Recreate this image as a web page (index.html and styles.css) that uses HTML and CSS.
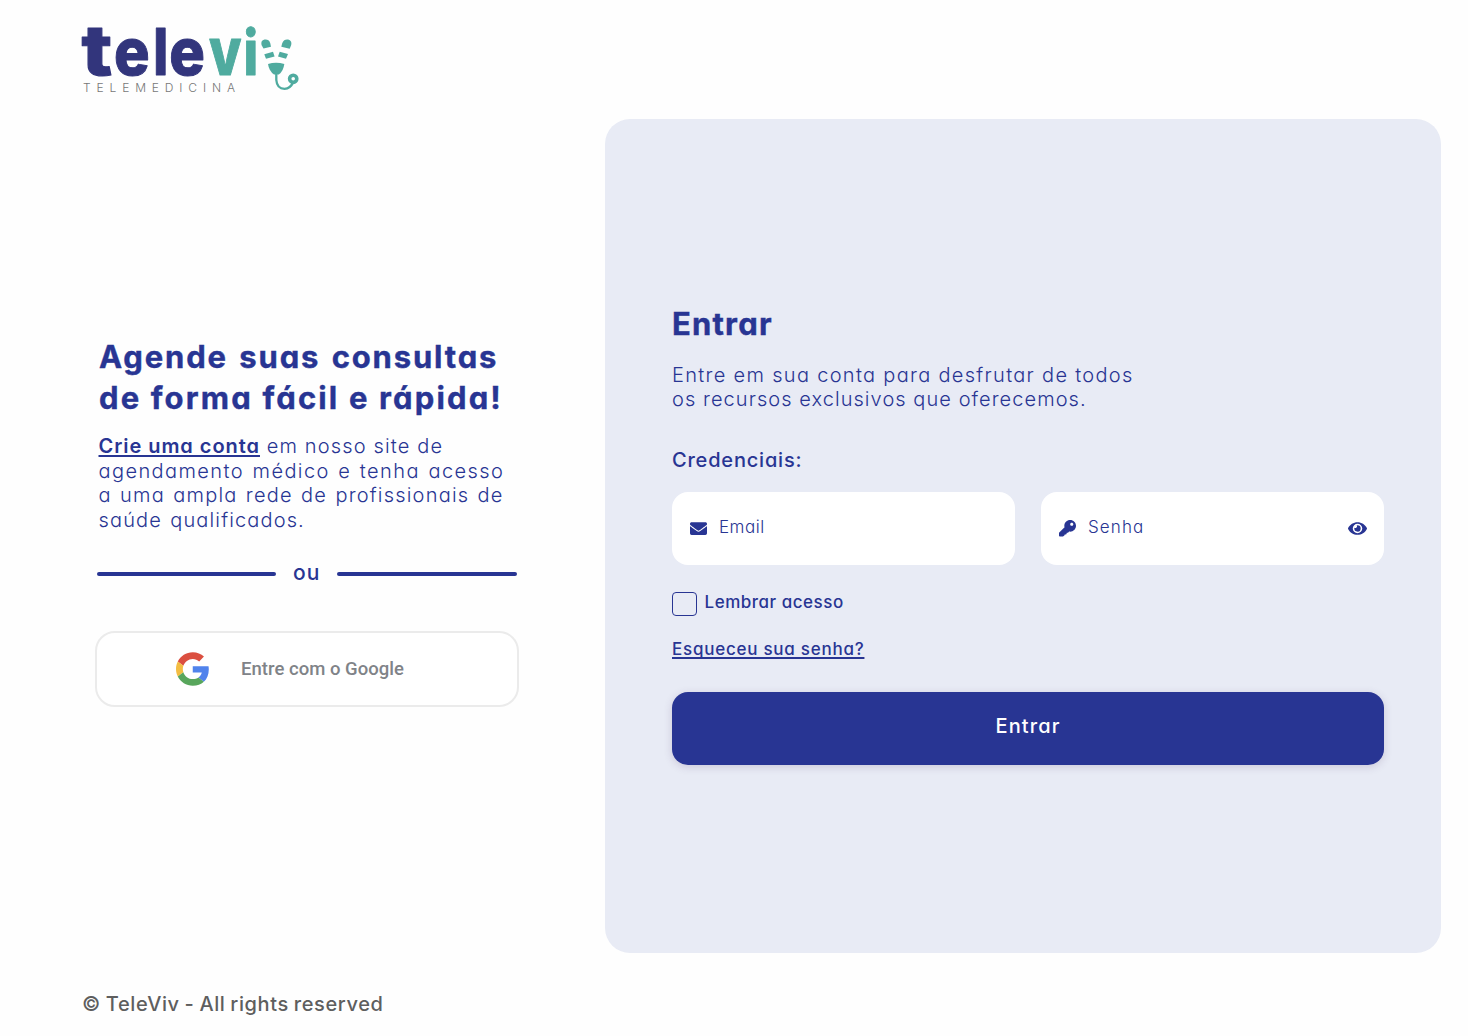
FILE: index.html
```html
<!DOCTYPE html>
<html lang="pt-BR">
<head>
<meta charset="utf-8">
<title>TeleViv - Entrar</title>
<link rel="stylesheet" href="styles.css">
</head>
<body>
<div class="page">
  <header class="header">
    <svg class="logo" width="220" height="70" viewBox="80 25 220 70" role="img" aria-label="Televiv Telemedicina">
      <g class="logo-word logo-navy">
        <text transform="translate(81.500 75) scale(1.220 1.050)">t</text>
        <text transform="translate(114 75) scale(.9 1)">e</text>
        <text transform="translate(153.300 74.500) scale(.8 .98)">l</text>
        <text transform="translate(169.300 75) scale(.9 1)">e</text>
      </g>
      <g class="logo-word logo-teal">
        <text transform="translate(209 74.500) scale(.8 1)">v</text>
        <text transform="translate(243.500 74.500) scale(.78 .95)">i</text>
      </g>
      <text class="logo-sub" x="83" y="92" textLength="152">TELEMEDICINA</text>
      <g fill="#4fab9f">
        <path d="M263.500 48.500 L261.500 45 Q260.500 40.500 264.500 39.600 Q268.800 39 270.200 43 L271 46.700Z"/>
        <path d="M281.300 46.700 L282.300 43 Q284 39 288.200 39.600 Q292.200 40.800 291.200 45 L289.700 48.800Z"/>
        <path d="M264.300 54.300 L273 51.800 L274.600 56.600 L266 58.700Z"/>
        <path d="M279.700 51.800 L288 54 L286 58.700 L278 56.600Z"/>
        <path d="M268 64 Q276 61.600 284.300 64 Q283.500 71 278.800 74.500 H274 Q269 71 268 64Z"/>
      </g>
      <path d="M276.300 73 V80 Q277 88.800 284.500 88.800 Q290.500 88.500 293 82.500" fill="none" stroke="#4fab9f" stroke-width="2.300"/>
      <circle cx="293.200" cy="78.800" r="3.600" fill="none" stroke="#4fab9f" stroke-width="3.600"/>
    </svg>
  </header>

  <main class="main">
    <section class="intro">
      <h1 class="intro-title"><span class="line t1">Agende suas consultas</span><span class="line t2">de forma fácil e rápida!</span></h1>
      <p class="intro-text"><span class="line p1"><a class="signup" href="#">Crie uma conta</a> em nosso site de</span><span class="line p2">agendamento médico e tenha acesso</span><span class="line p3">a uma ampla rede de profissionais de</span><span class="line p4">saúde qualificados.</span></p>
      <div class="divider"><span class="rule"></span><span class="or">ou</span><span class="rule"></span></div>
      <button class="google" type="button">
        <svg class="google-icon" width="34" height="34" viewBox="0 0 48 48" aria-hidden="true">
          <path fill="#db4f40" d="M24 9.500c3.540 0 6.710 1.220 9.210 3.600l6.850-6.850C35.900 2.380 30.470 0 24 0 14.620 0 6.510 5.380 2.560 13.220l7.980 6.190C12.430 13.720 17.740 9.500 24 9.500z"/>
          <path fill="#5083ec" d="M46.980 24.550c0-1.570-.15-3.090-.38-4.550H24v9.020h12.940c-.58 2.960-2.260 5.480-4.780 7.180l7.730 6c4.510-4.180 7.090-10.360 7.090-17.650z"/>
          <path fill="#f3bd42" d="M10.530 28.590c-.48-1.450-.76-2.990-.76-4.590s.27-3.140.76-4.590l-7.980-6.190C.92 16.460 0 20.120 0 24c0 3.880.92 7.540 2.560 10.780l7.970-6.190z"/>
          <path fill="#58a65c" d="M24 48c6.480 0 11.930-2.130 15.890-5.810l-7.730-6c-2.150 1.450-4.920 2.300-8.160 2.300-6.260 0-11.570-4.220-13.470-9.910l-7.980 6.190C6.510 42.620 14.620 48 24 48z"/>
        </svg>
        <span>Entre com o Google</span>
      </button>
    </section>

    <section class="panel">
      <h2 class="panel-title">Entrar</h2>
      <p class="panel-text"><span class="line e1">Entre em sua conta para desfrutar de todos</span><span class="line e2">os recursos exclusivos que oferecemos.</span></p>
      <h3 class="credentials">Credenciais:</h3>
      <div class="fields">
        <div class="field">
          <svg class="icon" width="17" height="17" viewBox="0 0 512 512" aria-hidden="true"><path fill="#283593" d="M502.300 190.800c3.900-3.100 9.700-.2 9.700 4.700V400c0 26.500-21.500 48-48 48H48c-26.500 0-48-21.500-48-48V195.600c0-5 5.700-7.800 9.700-4.700 22.400 17.400 52.100 39.500 154.100 113.600 21.100 15.400 56.700 47.800 92.200 47.600 35.700.3 72-32.800 92.300-47.600 102-74.100 131.600-96.300 154-113.700zM256 320c23.200.4 56.600-29.200 73.400-41.400 132.700-96.300 142.800-104.700 173.400-128.700 5.800-4.500 9.200-11.500 9.200-18.900v-19c0-26.500-21.500-48-48-48H48c-26.500 0-48 21.500-48 48v19c0 7.400 3.400 14.300 9.200 18.900 30.600 23.900 40.700 32.400 173.400 128.700 16.800 12.200 50.200 41.800 73.400 41.400z"/></svg>
          <span class="field-label email">Email</span>
        </div>
        <div class="field">
          <svg class="icon" width="17" height="17" viewBox="0 0 512 512" aria-hidden="true"><path fill="#283593" d="M512 176c0 97.200-78.800 176-176 176-11.200 0-22.200-1.100-32.800-3.100l-24 27a24 24 0 0 1-17.900 8.100H236l-14 42-28 10h-20l-18 38-20 10-12 12H24c-13.300 0-24-10.700-24-24v-78c0-6.400 2.500-12.500 7-17l161.800-161.800C163 213.800 160 195.300 160 176 160 78.800 238.800 0 336 0s176 78.500 176 176zM336 128c0 26.500 21.500 48 48 48s48-21.500 48-48-21.500-48-48-48-48 21.500-48 48z"/></svg>
          <span class="field-label password">Senha</span>
          <svg class="eye" width="19" height="17" viewBox="0 0 576 512" aria-hidden="true"><path fill="#283593" d="M572.500 241.400C518.300 135.600 410.900 64 288 64S57.700 135.600 3.500 241.400a32.400 32.400 0 0 0 0 29.200C57.700 376.400 165.100 448 288 448s230.300-71.600 284.500-177.400a32.400 32.400 0 0 0 0-29.200zM288 400a144 144 0 1 1 144-144 143.900 143.900 0 0 1-144 144zm0-240a95.300 95.300 0 0 0-25.300 3.800 47.900 47.900 0 0 1-66.900 66.900A95.800 95.800 0 1 0 288 160z"/></svg>
        </div>
      </div>
      <label class="remember"><input class="checkbox" type="checkbox"><span class="remember-text">Lembrar acesso</span></label>
      <a class="forgot" href="#">Esqueceu sua senha?</a>
      <button class="submit" type="button">Entrar</button>
    </section>
  </main>

  <footer class="footer">© TeleViv - All rights reserved</footer>
</div>
</body>
</html>
```
FILE: styles.css
```css
* { box-sizing: border-box; }
body {
  margin: 0;
  background: #fefefe;
  color: #283593;
  font-family: Inter, "Liberation Sans", sans-serif;
  font-feature-settings: "cv11" 1;
}
h1, h2, h3, p { margin: 0; }
button { font-family: inherit; font-feature-settings: inherit; }
.page { width: 1468px; height: 1036px; display: flex; flex-direction: column; overflow: hidden; }
.header { height: 119px; padding: 25px 0 0 80px; }
.logo { display: block; overflow: visible; }
.logo-word { font-size: 66px; font-weight: 800; stroke-width: 1px; stroke-linejoin: round; }
.logo-navy { fill: #32357c; stroke: #32357c; }
.logo-teal { fill: #4fab9f; stroke: #4fab9f; }
.logo-sub { font-size: 12px; font-weight: 300; fill: #777; }
.main { display: flex; height: 834px; }
.line { display: block; white-space: nowrap; }
.t1 { letter-spacing: 1.850px; word-spacing: 2.200px; }
.t2 { letter-spacing: 2.150px; }
.p1 { letter-spacing: 1.150px; }
.p2 { letter-spacing: 1.410px; word-spacing: 1.500px; }
.p3 { letter-spacing: 1.200px; word-spacing: 1.500px; }
.p4 { letter-spacing: 1.140px; word-spacing: 1.500px; }
.e1 { letter-spacing: 1.310px; }
.e2 { letter-spacing: 1.060px; }

.intro { width: 604.500px; padding: 218.200px 0 0 95px; }
.intro-title { padding-left: 4px; font-size: 31px; font-weight: 800; line-height: 40.800px; }
.t1, .t2 { margin-right: 0; font-weight: 700; -webkit-text-stroke: .4px #283593; }
.intro-text { padding-left: 3.500px; margin-top: 15.700px; font-size: 20px; font-weight: 300; line-height: 24.500px; }
.signup { color: inherit; font-weight: 600; letter-spacing: .95px; text-decoration-thickness: 2px; text-underline-offset: 2px; text-decoration-skip-ink: none; }
.divider { display: flex; align-items: center; justify-content: space-between; width: 420px; height: 24px; margin: 29.500px 0 0 1.700px; }
.rule { width: 179.500px; height: 4px; border-radius: 2px; background: #283593; }
.or { padding-bottom: 1px; font-size: 21px; font-weight: 500; line-height: 24px; letter-spacing: 1px; }
.google {
  display: flex; align-items: center; gap: 32px;
  width: 423.500px; height: 76.500px; margin-top: 44.700px; padding: 0 0 0 78.500px;
  border: 2px solid #ebebeb; border-radius: 20px; background: #fff;
  color: #808388; font: 500 18.500px Roboto, sans-serif; letter-spacing: .03px;
}
.google-icon { width: 33.500px; }

.panel { width: 836.500px; padding: 185px 57px 0 67.500px; border-radius: 25px; background: #e8ebf5; }
.panel-title { font-size: 31px; font-weight: 700; line-height: 40px; letter-spacing: 1.200px; -webkit-text-stroke: .4px #283593; }
.panel-text { margin-top: 18.700px; font-size: 20px; font-weight: 300; line-height: 24.500px; }
.credentials { margin-top: 36.700px; font-size: 20px; font-weight: 500; line-height: 24px; letter-spacing: .8px; }
.fields { display: grid; grid-template-columns: 1fr 1fr; gap: 26px; margin-top: 19.600px; }
.field { display: flex; align-items: center; height: 73.500px; padding: 0 17px 0 18px; border-radius: 16px; background: #fff; }
.field-label { margin: 0 0 3px 12px; font-size: 17px; font-weight: 300; line-height: 20px; }
.email { letter-spacing: .5px; }
.password { letter-spacing: 1.100px; }
.eye { margin-left: auto; }
.remember { display: flex; align-items: flex-start; gap: 8px; height: 24.500px; margin-top: 26.500px; }
.checkbox { appearance: none; width: 24.500px; height: 24.500px; margin: 0; border: 1.200px solid #283593; border-radius: 4px; }
.remember-text { font-size: 17px; font-weight: 500; line-height: 20px; letter-spacing: .52px; }
.forgot { display: block; width: max-content; margin-top: 22.500px; color: inherit; font-size: 17px; font-weight: 500; line-height: 20px; letter-spacing: .75px; text-decoration-thickness: 1.500px; text-underline-offset: 2px; text-decoration-skip-ink: none; }
.submit {
  display: block; width: 100%; height: 73.500px; margin-top: 33px; padding: 0 0 5px;
  border: 0; border-radius: 16px; background: #283593; color: #fff;
  font-size: 20px; font-weight: 500; letter-spacing: 1.100px;
  box-shadow: 0 2px 8px rgba(80, 50, 100, .18);
}
.footer { padding: 38.500px 0 0 82px; color: #5e5e5e; font-size: 20px; font-weight: 500; line-height: 24px; letter-spacing: .6px; word-spacing: -1px; }
```
